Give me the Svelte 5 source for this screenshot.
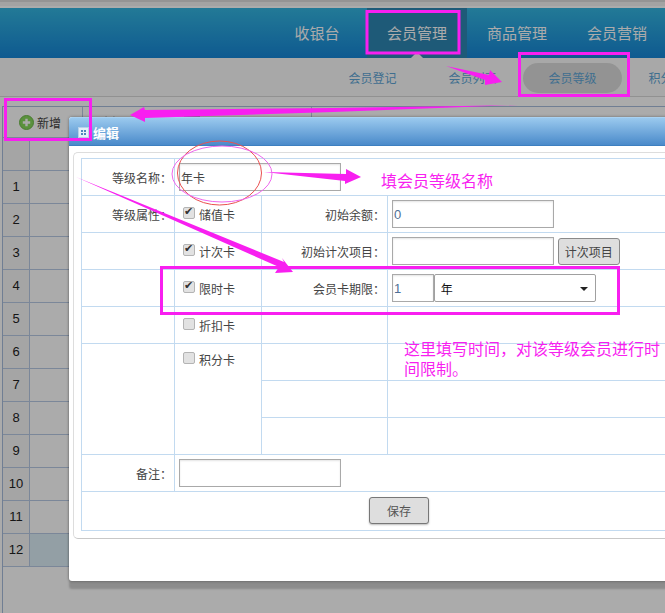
<script>
  const navItems = ['收银台', '会员管理', '商品管理', '会员营销'];
  const subItems = ['会员登记', '会员列表', '会员等级', '积分管理'];
  const rows = [1, 2, 3, 4, 5, 6, 7, 8, 9, 10, 11, 12];
</script>

<div class="page">
  <div class="top-strip"></div>

  <nav class="nav">
    {#each navItems as item}
      <a class="nav-item" class:active={item === '会员管理'} href="#top">{item}</a>
    {/each}
  </nav>

  <div class="subnav">
    {#each subItems as item}
      <span class="sub-item" class:current={item === '会员等级'}>{item}</span>
    {/each}
  </div>

  <section class="grid">
    <div class="toolbar">
      <div class="tool first">
        <svg width="15" height="15" viewBox="0 0 15 15">
          <circle cx="7.5" cy="7.5" r="7" fill="#86d85c" stroke="#6fb84a" />
          <path d="M7.5 3.8v7.4M3.8 7.5h7.4" stroke="#fff" stroke-width="2.4" />
        </svg>
        <span>新增</span>
      </div>
      <div class="tool muted w82">
        <svg width="14" height="14" viewBox="0 0 14 14">
          <path d="M2 2l10 10M12 2L2 12" stroke="#b9c2cc" stroke-width="3" />
        </svg>
        <span>删除</span>
      </div>
      <div class="tool muted w82">
        <svg width="16" height="14" viewBox="0 0 16 14">
          <rect x="1" y="1" width="14" height="12" fill="none" stroke="#b9c2cc" stroke-width="2" />
        </svg>
        <span>修改</span>
      </div>
      <div class="tool muted w65"><span>升级</span></div>
    </div>
    <div class="head-row"><div class="num"></div><div class="cell"></div></div>
    {#each rows as n}
      <div class="grid-row" class:selected={n === 12}>
        <div class="num">{n}</div>
        <div class="cell"></div>
      </div>
    {/each}
  </section>

  <div class="mask"></div>

  <div class="dialog">
    <header class="dialog-title">
      <svg width="11" height="11" viewBox="0 0 11 11">
        <rect x="0.5" y="0.5" width="10" height="10" fill="#e4eff9" stroke="#b8d2ea" />
        <path d="M3 3h2v2H3zM6 3h2v2H6zM3 6h2v2H3zM6 6h2v2H6z" fill="#4f86bd" />
      </svg>
      <span>编辑</span>
    </header>
    <div class="panel">
      <table class="form">
        <colgroup>
          <col style="width: 93px" />
          <col style="width: 87px" />
          <col style="width: 126px" />
          <col />
        </colgroup>
        <tbody>
          <tr>
            <td class="label">等级名称：</td>
            <td colspan="3"><input class="text" value="年卡" /></td>
          </tr>
          <tr>
            <td class="label">等级属性：</td>
            <td><label class="check"><input type="checkbox" checked />储值卡</label></td>
            <td class="label">初始余额：</td>
            <td><input class="text blue" value="0" /></td>
          </tr>
          <tr>
            <td></td>
            <td><label class="check"><input type="checkbox" checked />计次卡</label></td>
            <td class="label">初始计次项目：</td>
            <td class="inline">
              <input class="text" value="" />
              <button class="small" type="button">计次项目</button>
            </td>
          </tr>
          <tr>
            <td></td>
            <td><label class="check"><input type="checkbox" checked />限时卡</label></td>
            <td class="label">会员卡期限：</td>
            <td class="inline">
              <input class="text short blue" value="1" />
              <span class="select-wrap">
                <select><option>年</option><option>月</option><option>日</option></select>
              </span>
            </td>
          </tr>
          <tr>
            <td></td>
            <td><label class="check"><input type="checkbox" />折扣卡</label></td>
            <td></td>
            <td></td>
          </tr>
          <tr>
            <td rowspan="3"></td>
            <td rowspan="3" class="top"><label class="check"><input type="checkbox" />积分卡</label></td>
            <td></td>
            <td></td>
          </tr>
          <tr><td></td><td></td></tr>
          <tr><td></td><td></td></tr>
          <tr>
            <td class="label">备注：</td>
            <td colspan="3"><input class="text" value="" /></td>
          </tr>
          <tr>
            <td colspan="4" class="center"><button class="save" type="button">保存</button></td>
          </tr>
        </tbody>
      </table>
    </div>
  </div>

  <svg class="marks" width="665" height="613" viewBox="0 0 665 613">
    <g fill="none" stroke="#f81ff0" stroke-width="3">
      <rect x="367" y="11.5" width="92" height="41.5" />
      <rect x="519.5" y="53.5" width="109" height="42" />
      <rect x="5.5" y="99.5" width="85" height="40" />
      <rect x="161.5" y="267.5" width="457" height="46" />
    </g>
    <g fill="#f81ff0">
      <polygon points="446,66 489,75 490,70 502,82 485,85 485,80" />
      <polygon points="130,115 144,107 145,110 333,108 518,105 333,112 145,118 145,122" />
      <polygon points="264,172 346,174 346,169 361,177 345,184 345,181" />
      <polygon points="76,177 284,262 282,258 293,272 275,273 279,267" />
    </g>
    <ellipse cx="219.5" cy="173" rx="42" ry="32" fill="none" stroke="#ea5050" />
    <ellipse cx="222" cy="174" rx="50" ry="28" fill="none" stroke="#ee66ee" />
  </svg>
  <div class="note one">填会员等级名称</div>
  <div class="note two">这里填写时间，对该等级会员进行时间限制。</div>
</div>

<style>
  :global(body) {
    margin: 0;
    overflow: hidden;
  }

  .page {
    position: relative;
    width: 665px;
    height: 613px;
    overflow: hidden;
    display: flex;
    flex-direction: column;
    background: #fff;
    font-family: "Noto Sans CJK SC", "Liberation Sans", sans-serif;
    font-size: 12px;
    color: #333;
  }

  .top-strip {
    height: 6px;
    flex: none;
    margin-bottom: 2px;
    border-top: 2px solid #ddd;
    background: #f4f4f4;
    box-sizing: border-box;
  }

  .nav {
    flex: none;
    height: 50px;
    display: flex;
    padding-left: 267px;
    background: linear-gradient(#34b6e1, #1686d7);
  }

  .nav-item {
    flex: none;
    width: 100px;
    line-height: 50px;
    text-align: center;
    font-size: 15px;
    color: #fff;
    text-decoration: none;
    position: relative;
  }

  .nav-item.active {
    background: #2e86b3;
  }

  .nav-item.active::after {
    content: '';
    position: absolute;
    left: 44px;
    bottom: 0;
    border: 6px solid transparent;
    border-top: 0;
    border-bottom-color: #fbfbfb;
  }

  .subnav {
    flex: none;
    height: 39px;
    box-sizing: border-box;
    padding: 5px 0 0 323px;
    display: flex;
    border-bottom: 1px solid #d8d8d8;
    background: #fbfbfb;
  }

  .sub-item {
    flex: none;
    width: 99px;
    margin-right: 1px;
    height: 30px;
    line-height: 30px;
    text-align: center;
    color: #5fa6d6;
    border-radius: 15px;
    white-space: nowrap;
  }

  .sub-item.current {
    background: #dcdcdc;
  }

  .grid {
    flex: 1;
    margin: 9px 0 0 2px;
    border-left: 1px solid #a8bcdc;
    border-top: 1px solid #a8bcdc;
    color: #222;
  }

  .toolbar {
    height: 30px;
    display: flex;
    align-items: center;
    border-bottom: 1px solid #b8cae4;
  }

  .tool {
    height: 100%;
    box-sizing: border-box;
    display: flex;
    align-items: center;
    justify-content: center;
    gap: 3px;
  }

  .tool.first {
    width: 80px;
    justify-content: flex-start;
    padding-left: 16px;
    border-right: 1px solid #b8cae4;
    color: #444;
  }

  .tool.muted {
    color: #c4ccd4;
  }

  .w82 {
    width: 82px;
  }

  .w65 {
    width: 65px;
    border-right: 1px solid #b8cae4;
  }

  .head-row,
  .grid-row {
    display: flex;
    height: 33px;
    box-sizing: border-box;
    border-bottom: 1px solid #b8cae4;
  }

  .num {
    width: 26px;
    flex: none;
    border-right: 1px solid #b8cae4;
    background: #f6f6f6;
    text-align: center;
    font: 13px/32px "Liberation Sans", sans-serif;
  }

  .cell {
    flex: 1;
  }

  .grid-row.selected .cell {
    background: #dcedf6;
  }

  .mask {
    position: absolute;
    inset: 0;
    background: rgba(0, 0, 0, 0.33);
  }

  .dialog {
    position: absolute;
    left: 69px;
    top: 117px;
    width: 660px;
    height: 464px;
    box-sizing: border-box;
    background: #fff;
    border-radius: 3px;
    box-shadow: 0 8px 2px rgba(0, 0, 0, 0.18), 0 0 3px rgba(0, 0, 0, 0.4);
  }

  .dialog-title {
    height: 29px;
    box-sizing: border-box;
    display: flex;
    align-items: center;
    gap: 4px;
    padding: 1px 0 0 9px;
    border-top: 1px solid #a9d2f2;
    border-bottom: 1px solid #3d7fc0;
    border-radius: 3px 3px 0 0;
    background: linear-gradient(#9ac9ee, #4a8aca);
    color: #fff;
    font-size: 13px;
    font-weight: 700;
  }

  .panel {
    margin: 6px 0 0 4px;
    padding: 6px 0 7px 7px;
    border: 1px solid #ddd;
    border-right: 0;
    border-bottom-color: #c8c8c8;
    border-radius: 5px 0 0 5px;
  }

  .form {
    width: 636px;
    table-layout: fixed;
    border-collapse: collapse;
    margin-top: -1px;
  }

  .form td {
    height: 36px;
    padding: 0 0 0 4px;
    border: 1px solid #c2daf0;
    color: #444;
  }

  .form td.label {
    padding: 0 2px 0 0;
    text-align: right;
  }

  .form td.top {
    vertical-align: top;
    padding-top: 7px;
  }

  .form td.center {
    text-align: center;
    padding: 0 0 2px;
  }

  .form td.inline {
    white-space: nowrap;
  }

  .text {
    width: 162px;
    height: 28px;
    box-sizing: border-box;
    padding: 0 1px;
    border: 1px solid #a9a9a9;
    box-shadow: inset 0 1px 2px #e4e4e4;
    font: 12px "Noto Sans CJK SC", sans-serif;
    color: #444;
    vertical-align: middle;
    outline: none;
  }

  .text.blue {
    font: 13px "Liberation Sans", sans-serif;
    color: #4f6f96;
  }

  .text.short {
    width: 42px;
  }

  .check {
    display: flex;
    align-items: center;
    gap: 4px;
    padding-left: 4px;
  }

  .check input {
    appearance: none;
    width: 12px;
    height: 12px;
    margin: -3px 0 0;
    box-sizing: border-box;
    border: 1px solid #b4b4b4;
    border-radius: 2px;
    background: #e2e2e2;
    position: relative;
  }

  .check input:checked::after {
    content: '✔';
    position: absolute;
    left: 0;
    top: -3px;
    font: 11px/14px "DejaVu Sans", sans-serif;
    color: #333;
  }

  .small {
    width: 62px;
    height: 27px;
    margin-left: 1px;
    padding: 0;
    border: 1px solid #8a8a8a;
    border-radius: 3px;
    background: #dedede;
    font: 12px "Noto Sans CJK SC", sans-serif;
    color: #444;
    vertical-align: middle;
  }

  .select-wrap {
    display: inline-block;
    position: relative;
    vertical-align: middle;
    margin-left: -3px;
  }

  .select-wrap::after {
    content: '';
    position: absolute;
    right: 8px;
    top: 13px;
    border: 4px solid transparent;
    border-bottom: 0;
    border-top-color: #222;
  }

  select {
    display: block;
    width: 162px;
    height: 28px;
    box-sizing: border-box;
    padding: 0 6px;
    appearance: none;
    border: 1px solid #a0a0a0;
    border-radius: 2px;
    background: #fff;
    font: 12px "Noto Sans CJK SC", sans-serif;
    color: #111;
  }

  .save {
    width: 60px;
    height: 27px;
    padding: 0;
    border: 1px solid #777;
    border-radius: 3px;
    background: #dedede;
    box-shadow: 0 1px 2px #bbb;
    font: 12px "Noto Sans CJK SC", sans-serif;
    color: #555;
  }

  .marks {
    position: absolute;
    left: 0;
    top: 0;
    pointer-events: none;
  }

  .note {
    position: absolute;
    font-size: 16px;
    line-height: 20px;
    color: #f81ff0;
  }

  .note.one {
    left: 381px;
    top: 170px;
  }

  .note.two {
    left: 404px;
    top: 338px;
    width: 258px;
  }
</style>
